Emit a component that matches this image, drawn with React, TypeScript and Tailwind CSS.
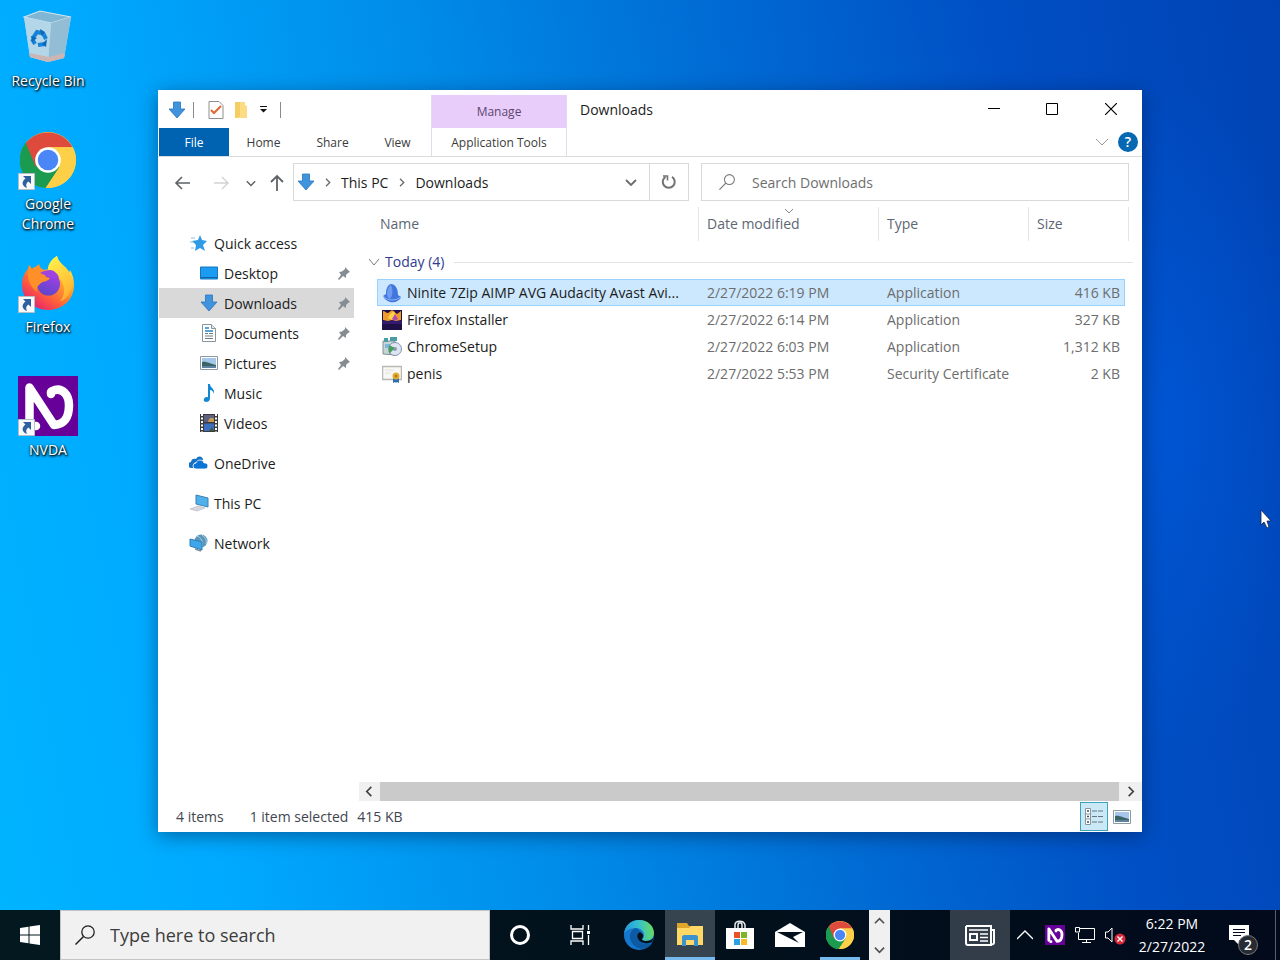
import { useId, type ReactNode } from 'react'
import clsx from 'clsx'

// ---------- Icons ----------

function ChromeIcon({ size }: { size: number }) {
  return (
    <svg width={size} height={size} viewBox="0 0 48 48" aria-hidden="true">
      <circle cx="24" cy="24" r="24" fill="#fdd047" />
      <path d="M24 24 5 9A24 24 0 0 0 22 48l12-18Z" fill="#1a9b4f" />
      <path d="M5 9.500A24 24 0 0 1 45 13H24l-10.400 17Z" fill="#de4a3b" />
      <path d="M24 13h21.300A24 24 0 0 1 22 48l12-18Z" fill="#fdd047" />
      <circle cx="24" cy="24" r="11" fill="#fff" />
      <circle cx="24" cy="24" r="8.800" fill="#4a86f5" />
    </svg>
  )
}

function FirefoxIcon() {
  const id = useId()
  return (
    <svg width="54" height="56" viewBox="0 0 54 56" aria-hidden="true">
      <defs>
        <linearGradient id={`${id}a`} x1="0.85" y1="0.1" x2="0.25" y2="0.95">
          <stop offset="0" stopColor="#fff44f" />
          <stop offset="0.35" stopColor="#ffa52a" />
          <stop offset="0.7" stopColor="#ff5f3a" />
          <stop offset="1" stopColor="#e8246f" />
        </linearGradient>
        <linearGradient id={`${id}b`} x1="0.7" y1="0" x2="0.3" y2="1">
          <stop offset="0" stopColor="#a63ee8" />
          <stop offset="1" stopColor="#5a47c8" />
        </linearGradient>
        <linearGradient id={`${id}c`} x1="0.3" y1="0" x2="0.7" y2="1">
          <stop offset="0" stopColor="#fff04a" />
          <stop offset="1" stopColor="#ffae2e" />
        </linearGradient>
      </defs>
      <path
        d="M36 1c1 5 5 8 9 12 1 1 3 3 3 5l1-3c3 5 4 10 4 15 0 15-12 25-26 25S1 44 1 30c0-8 3-13 6-16l1-4 3 4c2-2 5-2 7-5 0 3 2 5 5 6l4-1C28 9 31 4 36 1Z"
        fill={`url(#${id}a)`}
      />
      <path d="M36 1c1 5 5 8 9 12 7 8 8 18 3 26-2 4-6 7-9 7 6-6 5-16 0-22-3-4-9-6-12-10 0-5 4-10 9-13Z" fill={`url(#${id}c)`} />
      <circle cx="27.500" cy="29" r="11.500" fill={`url(#${id}b)`} />
      <path d="M7 17 8 10l3 4c2-2 5-2 7-5 0 3 2 5 5 6l2 7 4 1c-2 4-8 3-10 6-3 2-4 5-3 8-6-5-10-12-9-20Z" fill="#ff8f28" />
      <path d="M19 18c3-2 7-3 11-3 4 1 7 4 8 8l-10-1Z" fill="#a044e0" />
    </svg>
  )
}

function NvdaIcon({ size }: { size: number }) {
  return (
    <svg width={size} height={size} viewBox="0 0 60 60" aria-hidden="true">
      <path d="M0 0h60v60H0Z" fill="#660099" />
      <path
        d="M11.500 46V11.500L36 49c13-1 15-11 15-20 0-9-6-19-17-14"
        fill="none"
        stroke="#fff"
        strokeWidth="8.500"
        strokeLinecap="round"
        strokeLinejoin="round"
      />
      <path d="M33 16v2M17 50h1" stroke="#fff" strokeWidth="8.500" strokeLinecap="round" />
    </svg>
  )
}

function RecycleIcon() {
  return (
    <svg width="50" height="54" viewBox="0 0 50 54" aria-hidden="true">
      <path d="M1 7 17 1l31 6-7 41-16 4-18-5Z" fill="#b9d9ea" />
      <path d="M1 7 17 1l31 6-20 6Z" fill="#7fb6d4" stroke="#cfe3ee" strokeWidth="1.200" />
      <path d="m28 13 20-6-7 41-16 4Z" fill="#93bdd4" />
      <path d="m1 7 27 6-3 39-18-5Z" fill="#b3d6e9" />
      <path d="m6 43 20 4 16-4-1 5-16 4-18-5Z" fill="#cdb5b4" />
      <g fill="none" stroke="#1683d8" strokeWidth="4">
        <path d="m10 28 4-6 4 1M20 23l3 6M22 34l-7 1M12 34l-3-5" />
      </g>
      <path d="m17 19 5 3-4 4ZM24 29l-1 8-4-3ZM8 26l6 2-5 4Z" fill="#0869bd" />
    </svg>
  )
}

function ShortcutBadge() {
  return (
    <svg className="absolute bottom-0 left-0" width="17" height="17" viewBox="0 0 17 17" aria-hidden="true">
      <path d="M.5.500h16v16H.5Z" fill="#f8f9fa" stroke="#b6bfc8" />
      <path d="M5 3h8v8l-2.500-2.500C8 10 7.500 12 9 15c-5-2-6-6-1.500-9.500Z" fill="#2e5f9e" />
    </svg>
  )
}

function DownArrow() {
  return (
    <svg width="18" height="18" viewBox="0 0 18 18" aria-hidden="true">
      <path d="M5.500 1h7v7H17l-8 9-8-9h4.500Z" fill="#3f94dd" stroke="#2a74bd" strokeWidth=".8" />
    </svg>
  )
}

function Chevron({ dir, size = 12, className }: { dir: 'up' | 'down' | 'left' | 'right'; size?: number; className?: string }) {
  const paths = {
    up: 'M1 9l5-5 5 5',
    down: 'M1 4l5 5 5-5',
    left: 'M8 1 3 6l5 5',
    right: 'M4 1l5 5-5 5',
  }
  return (
    <svg width={size} height={size} viewBox="0 0 12 12" className={className} aria-hidden="true">
      <path d={paths[dir]} fill="none" stroke="currentColor" strokeWidth="1.800" />
    </svg>
  )
}

function PictureIcon() {
  return (
    <svg width="18" height="18" viewBox="0 0 18 18" aria-hidden="true">
      <path d="M.5 2.500h17v13H.5Z" fill="#fff" stroke="#8c9aa5" />
      <path d="M2 4h14v10H2Z" fill="#a6c7ec" />
      <path d="M2 8c5-1 8 2 14 3v3H2Z" fill="#3b6565" />
      <path d="M2 12h14v2H2Z" fill="#5d83a3" />
    </svg>
  )
}

function StarIcon() {
  return (
    <svg width="18" height="18" viewBox="0 0 18 18" aria-hidden="true">
      <path d="m10 1 2 5 5 1-4 4 2 6-5-3-5 3 1-6-4-4 6-1Z" fill="#2f9be6" />
      <path d="M1 4h4M0 8h3M1 14h3" stroke="#7dc1f0" />
    </svg>
  )
}

function DesktopIcon() {
  return (
    <svg width="18" height="18" viewBox="0 0 18 18" aria-hidden="true">
      <path d="M.5 3h17v12H.5Z" fill="#1b9cf2" stroke="#1476c0" />
      <path d="M1 13.500h16" stroke="#0f62a6" />
    </svg>
  )
}

function DocumentIcon() {
  return (
    <svg width="18" height="18" viewBox="0 0 18 18" aria-hidden="true">
      <path d="M2.500.500h9l4 4v13h-13Z" fill="#fff" stroke="#8c9399" />
      <path d="M11.500.500v4h4" fill="#e3e7ea" stroke="#8c9399" />
      <path d="M5 4h4M5 7h8" stroke="#1f82c8" strokeWidth="1.500" />
      <path d="M5 9.500h3M9 9.500h4M5 12h8M5 14.500h8" stroke="#6f7a83" />
    </svg>
  )
}

function MusicIcon() {
  return (
    <svg width="18" height="18" viewBox="0 0 18 18" aria-hidden="true">
      <path d="M8 0h2c0 4 5 4 4 10-1-3-2-4-4-4v8c0 3-2 4-4 4-3 0-3-4 0-5 1 0 1.500 0 2 .5Z" fill="#1487d4" />
    </svg>
  )
}

function VideoIcon() {
  return (
    <svg width="18" height="18" viewBox="0 0 18 18" aria-hidden="true">
      <path d="M0 0h18v18H0Z" fill="#3d3a3c" />
      <path d="M4 1h10v7H4Z" fill="#5b6180" />
      <path d="M4 9.500h10V17H4Z" fill="#3d6fc0" />
      <path d="M8 8c1-5 4-5 6-3v3Z" fill="#c79a4f" />
      <path d="m9 17 3-4 2 4Z" fill="#3d5a40" />
      <path d="M2 0v18M16 0v18" stroke="#fff" strokeWidth="2" strokeDasharray="2 1.500" />
    </svg>
  )
}

function OneDriveIcon() {
  return (
    <svg width="20" height="18" viewBox="0 0 20 18" aria-hidden="true">
      <path d="M5 14H3a3 3 0 0 1-1-6c0-3 3-4 5-3 2-4 7-3 7 1L5 9Z" fill="#1472c4" />
      <path d="M7 15a3 3 0 0 1 0-6c1-4 7-4 8 0 5-1 5 6 1 6Z" fill="#0b74d4" stroke="#fff" strokeWidth=".8" />
    </svg>
  )
}

function PcIcon() {
  return (
    <svg width="20" height="18" viewBox="0 0 20 18" aria-hidden="true">
      <path d="m7 1 12 3v9L7 10Z" fill="#4fb0ec" stroke="#3b80b3" />
      <path d="m1 15 8-3 7 2-8 3Z" fill="#d8d6e0" stroke="#a7abba" strokeWidth=".5" />
    </svg>
  )
}

function NetworkIcon() {
  return (
    <svg width="20" height="18" viewBox="0 0 20 18" aria-hidden="true">
      <circle cx="12" cy="7" r="6.500" fill="#5b96bb" />
      <path d="M8 2c4 1 6 5 5 11M13 1c4 3 5 6 4 9" fill="none" stroke="#a9d2e8" />
      <path d="m1 5 12 3v8L1 12Z" fill="#3fa6ec" stroke="#2d7eb8" />
      <path d="m6 15 6 2" stroke="#7a8fa0" strokeWidth="1.500" />
    </svg>
  )
}

function PinIcon() {
  return (
    <svg width="12" height="13" viewBox="0 0 12 13" aria-hidden="true">
      <path d="m7 0 5 5-2 1-2 2v3L5 9l-4 4-1-1 3-4-2-3 3-.5 3-2.500Z" fill="#858d93" />
    </svg>
  )
}

function NiniteIcon() {
  return (
    <svg width="20" height="20" viewBox="0 0 20 20" aria-hidden="true">
      <path d="M9 1c4 0 7 4 7 11l3 2c-1 4-7 6-11 5-3-1-6-3-7-6l3-2c0-4 1-9 5-10Z" fill="#4275dd" />
      <path d="M9 2c2 4 2 10-1 14-2-1-3-3-3-5 0-4 1-7 4-9Z" fill="#6d9df0" />
      <path d="M1 13c3 3 6 4 9 4s6-1 9-3" fill="none" stroke="#8fb6f8" />
    </svg>
  )
}

function FirefoxInstallerIcon() {
  return (
    <svg width="20" height="20" viewBox="0 0 20 20" aria-hidden="true">
      <path d="M0 0h20v20H0Z" fill="#1e1046" />
      <path d="M1 1c2 0 3 2 5 2l4-3 5 4 4-3v9l-5 1-4-1-4 1-5-1Z" fill="#ee9a2c" />
      <path d="m8 4 4-3 2 6-4 3-4-2Z" fill="#ffd04a" />
      <path d="m10 9 3-5 3 5-3 2Z" fill="#b04bb5" />
      <path d="M0 11h20v3H0Z" fill="#341a6c" />
    </svg>
  )
}

function SetupIcon() {
  return (
    <svg width="20" height="20" viewBox="0 0 20 20" aria-hidden="true">
      <path d="M1 4h12v14l-12-1Z" fill="#c5d6d6" stroke="#7f9196" />
      <path d="M2 1h4v4H2ZM8 0h7v4H8Z" fill="#4b9ca5" />
      <path d="M3 7h5v4H3Z" fill="#7fb6e0" />
      <circle cx="13" cy="12" r="6.500" fill="#dfe4f3" stroke="#8791b0" />
      <circle cx="13" cy="12" r="2" fill="#8f9ab5" />
      <path d="m7 8 6 3-6 6Z" fill="#43a05a" />
    </svg>
  )
}

function CertificateIcon() {
  return (
    <svg width="20" height="20" viewBox="0 0 20 20" aria-hidden="true">
      <path d="M.500 2.500h19v13H.5Z" fill="#f7f7f5" stroke="#b8b8b4" strokeWidth="1.500" />
      <path d="M3 6h9M3 9h6" stroke="#e2e2de" />
      <path d="M11 13v6l2-1 1 1 1-1 2 1v-6Z" fill="#2c6db4" />
      <circle cx="14" cy="12" r="3.500" fill="#e3ad2d" />
      <circle cx="14" cy="12" r="1.500" fill="#b9771b" />
    </svg>
  )
}

function SearchGlyph({ size, className }: { size: number; className?: string }) {
  return (
    <svg width={size} height={size} viewBox="0 0 20 20" className={className} aria-hidden="true">
      <circle cx="13" cy="7" r="6.200" fill="none" stroke="currentColor" strokeWidth="1.300" />
      <path d="M8.500 11.500.500 19.500" stroke="currentColor" strokeWidth="1.500" />
    </svg>
  )
}

function EdgeIcon() {
  const id = useId()
  return (
    <svg width="30" height="30" viewBox="0 0 30 30" aria-hidden="true">
      <defs>
        <linearGradient id={`${id}t`} x1="0" y1="0.5" x2="1" y2="0.4">
          <stop offset="0" stopColor="#2196dc" />
          <stop offset="0.5" stopColor="#35bfd0" />
          <stop offset="1" stopColor="#6bdc58" />
        </linearGradient>
      </defs>
      <circle cx="15" cy="15" r="15" fill="#1677cf" />
      <path d="M0 14C1 5 7 0 15 0c9 0 15 6 15 13 0 5-4 8-8 8-3 0-4-1-4-2 1-1 2-2 2-4 0-4-4-7-8-7-5 0-10 2-12 6Z" fill={`url(#${id}t)`} />
      <path d="M12 8c-6 2-8 9-4 15 3 5 9 7 14 5 3-1 5-3 6-5-8 3-15-1-15-7 0-2 1-4 3-4-1-2-2-3-4-4Z" fill="#0c59a4" />
      <path d="M16 12c-5 2-3 10 4 11 3 1 6 0 8-1l2-5c-2 3-5 4-8 4-3 0-4-1-4-2 2-2 2-5-2-7Z" fill="#03121d" />
    </svg>
  )
}

function FolderIcon() {
  return (
    <svg width="28" height="24" viewBox="0 0 28 24" aria-hidden="true">
      <path d="M1 0h10l2 3h14v19H1Z" fill="#e0a52b" />
      <path d="M1 5h12l2-2h12v19H1Z" fill="#ffd865" />
      <path d="M6 23v-9c0-1 1-2 2-2h12c1 0 2 1 2 2v9h-4v-6h-8v6Z" fill="#3c92cf" />
    </svg>
  )
}

function StoreIcon() {
  return (
    <svg width="30" height="30" viewBox="0 0 30 30" aria-hidden="true">
      <path d="M10 9V5c0-5 9-5 10 0v4M13 8V5c0-3 4-3 4 0v3" fill="none" stroke="#e8eaec" strokeWidth="1.500" />
      <path d="M1 8h28v20c0 1-1 1-1 1H2s-1 0-1-1Z" fill="#fff" />
      <path d="M9 12h6v6H9Z" fill="#e8532a" />
      <path d="M16 12h6v6h-6Z" fill="#7db52b" />
      <path d="M9 19h6v6H9Z" fill="#2ba0e2" />
      <path d="M16 19h6v6h-6Z" fill="#f8ba25" />
    </svg>
  )
}

function MailIcon() {
  return (
    <svg width="30" height="24" viewBox="0 0 30 24" aria-hidden="true">
      <path d="M0 9 15 0l15 9v15H0Z" fill="#fff" />
      <path d="M2 9h26l-10 5 6 6L2 9Z" fill="#04101b" />
    </svg>
  )
}

// ---------- Desktop ----------

interface Shortcut {
  label: string
  icon: ReactNode
  badge?: boolean
}

const SHORTCUTS: Shortcut[] = [
  { label: 'Recycle Bin', icon: <RecycleIcon /> },
  { label: 'Google Chrome', icon: <ChromeIcon size={56} />, badge: true },
  { label: 'Firefox', icon: <FirefoxIcon />, badge: true },
  { label: 'NVDA', icon: <NvdaIcon size={60} />, badge: true },
]

function DesktopShortcuts() {
  return (
    <div className="flex w-24 flex-col">
      {SHORTCUTS.map(s => (
        <button key={s.label} type="button" className="flex h-[123px] flex-col items-center px-1 pt-[7px]">
          <span className="relative flex h-[60px] w-[60px] shrink-0 items-center justify-center">
            {s.icon}
            {s.badge && <ShortcutBadge />}
          </span>
          <span className="mt-1 text-[14px] leading-5 text-white [text-shadow:1px_1px_2px_#000,0_1px_3px_#000]">
            {s.label}
          </span>
        </button>
      ))}
    </div>
  )
}

// ---------- Explorer window ----------

interface NavItem {
  label: string
  icon: ReactNode
  child?: boolean
  pinned?: boolean
  active?: boolean
  spaced?: boolean
}

const NAV: NavItem[] = [
  { label: 'Quick access', icon: <StarIcon /> },
  { label: 'Desktop', icon: <DesktopIcon />, child: true, pinned: true },
  { label: 'Downloads', icon: <DownArrow />, child: true, pinned: true, active: true },
  { label: 'Documents', icon: <DocumentIcon />, child: true, pinned: true },
  { label: 'Pictures', icon: <PictureIcon />, child: true, pinned: true },
  { label: 'Music', icon: <MusicIcon />, child: true },
  { label: 'Videos', icon: <VideoIcon />, child: true },
  { label: 'OneDrive', icon: <OneDriveIcon />, spaced: true },
  { label: 'This PC', icon: <PcIcon />, spaced: true },
  { label: 'Network', icon: <NetworkIcon />, spaced: true },
]

interface FileRow {
  name: string
  icon: ReactNode
  date: string
  type: string
  size: string
  selected?: boolean
}

const FILES: FileRow[] = [
  {
    name: 'Ninite 7Zip AIMP AVG Audacity Avast Avi...',
    icon: <NiniteIcon />,
    date: '2/27/2022 6:19 PM',
    type: 'Application',
    size: '416 KB',
    selected: true,
  },
  { name: 'Firefox Installer', icon: <FirefoxInstallerIcon />, date: '2/27/2022 6:14 PM', type: 'Application', size: '327 KB' },
  { name: 'ChromeSetup', icon: <SetupIcon />, date: '2/27/2022 6:03 PM', type: 'Application', size: '1,312 KB' },
  { name: 'penis', icon: <CertificateIcon />, date: '2/27/2022 5:53 PM', type: 'Security Certificate', size: '2 KB' },
]

function TitleBar() {
  return (
    <div className="flex h-[67px] shrink-0 border-b border-[#dadbdc]">
      <div className="flex w-[273px] flex-col">
        <div className="flex h-[38px] items-center pt-px pl-[10px]">
          <DownArrow />
          <span className="ml-[7px] h-4 w-px bg-[#8a8a8a]" />
          <button type="button" aria-label="Properties" className="ml-[14px]">
            <svg width="16" height="18" viewBox="0 0 16 18" aria-hidden="true">
              <path d="M1 .500h10l4 4v13H1Z" fill="#fff" stroke="#8f8f8f" />
              <path d="m3 9 3 3 7-7" fill="none" stroke="#e0672f" strokeWidth="2" />
            </svg>
          </button>
          <button type="button" aria-label="New folder" className="ml-[10px]">
            <svg width="14" height="18" viewBox="0 0 14 18" aria-hidden="true">
              <path d="M1 1h10v3l2 1v12H1Z" fill="#fbdc85" />
              <path d="M1 1h5v14l-3 2H1Z" fill="#f5cd62" />
            </svg>
          </button>
          <button type="button" aria-label="Customize Quick Access Toolbar" className="ml-[11px]">
            <svg width="9" height="7" viewBox="0 0 9 7" aria-hidden="true">
              <path d="M1 .500h7" stroke="#111" />
              <path d="M1 3h7L4.500 6.500Z" fill="#111" />
            </svg>
          </button>
          <span className="ml-3 h-4 w-px bg-[#8a8a8a]" />
        </div>
        <div className="flex h-7 text-[12px] text-[#3b3b3b] [&>button]:pt-px">
          <button type="button" className="ml-px w-[70px] bg-[#0063b1] text-white">File</button>
          <button type="button" className="w-[69px]">Home</button>
          <button type="button" className="w-[69px]">Share</button>
          <button type="button" className="w-[61px]">View</button>
        </div>
      </div>
      <div className="mt-[5px] flex w-[136px] flex-col border-r border-l border-[#e3dbe8] text-[12px] [&>button]:pt-px">
        <button type="button" className="h-[33px] bg-[#e8cdfb] text-[#5c4570]">Manage</button>
        <button type="button" className="h-7 whitespace-nowrap text-[#3b3b3b]">Application Tools</button>
      </div>
      <h1 className="mt-2 ml-[13px] text-[14px] leading-6 text-[#1c1c1c]">Downloads</h1>
      <div className="ml-auto flex flex-col">
        <div className="flex h-[38px] text-black">
          <button type="button" aria-label="Minimize" className="flex w-[58px] items-center justify-center">
            <svg width="12" height="12" viewBox="0 0 12 12" aria-hidden="true"><path d="M0 5.500h12" stroke="currentColor" /></svg>
          </button>
          <button type="button" aria-label="Maximize" className="flex w-[58px] items-center justify-center">
            <svg width="12" height="12" viewBox="0 0 12 12" aria-hidden="true"><path d="M.5.500h11v11H.5Z" fill="none" stroke="currentColor" /></svg>
          </button>
          <button type="button" aria-label="Close" className="flex w-[61px] items-center justify-center pr-0.5">
            <svg width="12" height="12" viewBox="0 0 12 12" aria-hidden="true"><path d="m0 0 12 12M12 0 0 12" stroke="currentColor" strokeWidth="1.200" /></svg>
          </button>
        </div>
        <div className="flex h-7 items-center justify-end gap-[10px] pr-1">
          <button type="button" aria-label="Expand the Ribbon" className="text-[#9a9a9a]">
            <svg width="12" height="12" viewBox="0 0 12 12" aria-hidden="true"><path d="m0 3 6 6 6-6" fill="none" stroke="currentColor" /></svg>
          </button>
          <button type="button" aria-label="Help" className="h-5 w-5 rounded-full bg-[#0667b2] text-[14px] leading-5 font-semibold text-white">
            ?
          </button>
        </div>
      </div>
    </div>
  )
}

function AddressRow() {
  return (
    <div className="grid h-[50px] shrink-0 grid-cols-[135px_minmax(0,396fr)_12px_minmax(0,428fr)] items-center pr-[13px] text-[14px]">
      <div className="flex items-center pt-px pl-4 text-[#5e6166]">
        <button type="button" aria-label="Back">
          <svg width="18" height="16" viewBox="0 0 18 16" aria-hidden="true"><path d="M16 8H2M8 2 2 8l6 6" fill="none" stroke="currentColor" strokeWidth="1.600" /></svg>
        </button>
        <button type="button" aria-label="Forward" className="ml-5 text-[#d0d2d4]">
          <svg width="18" height="16" viewBox="0 0 18 16" aria-hidden="true"><path d="M2 8h14M10 2l6 6-6 6" fill="none" stroke="currentColor" strokeWidth="1.400" /></svg>
        </button>
        <button type="button" aria-label="Recent locations" className="ml-4">
          <Chevron dir="down" size={10} />
        </button>
        <button type="button" aria-label="Up" className="ml-[14px]">
          <svg width="14" height="18" viewBox="0 0 14 18" aria-hidden="true"><path d="M7 17V2M1 8l6-6 6 6" fill="none" stroke="currentColor" strokeWidth="1.800" /></svg>
        </button>
      </div>
      <div className="flex h-[38px] border border-[#d9d9d9]">
        <div className="flex min-w-0 flex-1 items-center pl-[3px] text-[#1c1c1c]">
          <DownArrow />
          <Chevron dir="right" size={9} className="ml-2 text-[#6b6b6b]" />
          <button type="button" className="ml-[9px]">This PC</button>
          <Chevron dir="right" size={9} className="ml-[9px] text-[#6b6b6b]" />
          <button type="button" className="ml-[9px]">Downloads</button>
          <button type="button" aria-label="Previous locations" className="mr-3 ml-auto text-[#6b6b6b]">
            <Chevron dir="down" />
          </button>
        </div>
        <button type="button" aria-label="Refresh" className="flex w-[39px] items-center justify-center border-l border-[#d9d9d9] text-[#747474]">
          <svg width="16" height="16" viewBox="0 0 16 16" aria-hidden="true">
            <path d="M11 2.800a6 6 0 1 1-6.500 0" fill="none" stroke="currentColor" strokeWidth="2" />
            <path d="M2 2h4.500v4.500" fill="none" stroke="currentColor" strokeWidth="1.600" />
          </svg>
        </button>
      </div>
      <label className="col-start-4 flex h-[38px] items-center border border-[#d9d9d9] pl-[17px] text-[#777]">
        <SearchGlyph size={16} className="shrink-0" />
        <input
          type="search"
          aria-label="Search Downloads"
          placeholder="Search Downloads"
          className="ml-[17px] min-w-0 flex-1 outline-none placeholder:text-[#6e6e6e]"
        />
      </label>
    </div>
  )
}

function NavPane() {
  return (
    <nav className="w-[196px] shrink-0 pt-[21px] pl-px text-[14px] text-[#1c1c1c]">
      <ul>
        {NAV.map(item => (
          <li key={item.label} className={clsx(item.spaced && 'mt-[10px]')}>
            <a
              href="#"
              className={clsx(
                'flex h-[30px] items-center pr-1',
                item.child ? 'pl-10' : 'pl-[30px]',
                item.active && 'bg-[#d9d9d9]',
              )}
            >
              <span className="flex w-5 justify-center">{item.icon}</span>
              <span className="ml-[5px] flex-1">{item.label}</span>
              {item.pinned && <PinIcon />}
            </a>
          </li>
        ))}
      </ul>
    </nav>
  )
}

function FileTable() {
  return (
    <table className="ml-[14px] w-[calc(100%-23px)] table-fixed border-separate border-spacing-0 text-left text-[14px] leading-5">
      <colgroup>
        <col className="w-[9px]" />
        <col />
        <col className="w-[180px]" />
        <col className="w-[150px]" />
        <col className="w-24" />
        <col className="w-1" />
        <col className="w-1" />
      </colgroup>
      <thead>
        <tr className="h-[34px] text-[#5d6673] [&>th]:font-normal">
          <th colSpan={2} className="border-r border-[#e5e5e5] pl-3">Name</th>
          <th className="relative border-r border-[#e5e5e5] pl-2">
            Date modified
            <svg className="absolute top-px left-[85px]" width="10" height="7" viewBox="0 0 10 7" aria-hidden="true">
              <path d="m1 1 4 4 4-4" fill="none" stroke="#8a8a8a" />
            </svg>
          </th>
          <th className="border-r border-[#e5e5e5] pl-2">Type</th>
          <th colSpan={2} className="border-r border-[#e5e5e5] pl-2">Size</th>
          <td />
        </tr>
      </thead>
      <tbody>
        <tr>
          <td colSpan={7} className="h-[38px] p-0 pt-1">
            <button type="button" className="flex w-full items-center text-[#2f3a8f]">
              <svg width="12" height="12" viewBox="0 0 12 12" aria-hidden="true"><path d="m1 3 5 6 5-6" fill="none" stroke="#7b7b7b" /></svg>
              <span className="ml-[5px]">Today (4)</span>
              <span className="ml-[10px] h-px flex-1 bg-[#e2e2e2]" />
            </button>
          </td>
        </tr>
        {FILES.map(file => (
          <tr
            key={file.name}
            aria-selected={file.selected}
            className={clsx(
              'h-[27px] text-[#6d6d6d] [&>td]:p-0',
              file.selected && '[&>td.cell]:border-y [&>td.cell]:border-[#99d1ff] [&>td.cell]:bg-[#cce8ff]',
            )}
          >
            <td />
            <td className={clsx('cell text-[#1c1c1c]', file.selected && 'border-l')}>
              <span className={clsx('flex items-center whitespace-nowrap', file.selected ? 'pl-1' : 'pl-[5px]')}>
                <span className="h-5 w-5 shrink-0">{file.icon}</span>
                <span className="ml-[5px]">{file.name}</span>
              </span>
            </td>
            <td className="cell"><span className="pl-2">{file.date}</span></td>
            <td className="cell"><span className="pl-2">{file.type}</span></td>
            <td className={clsx('cell text-right', file.selected && 'border-r')}>
              <span className={file.selected ? 'pr-1' : 'pr-[5px]'}>{file.size}</span>
            </td>
          </tr>
        ))}
      </tbody>
    </table>
  )
}

function ExplorerWindow() {
  return (
    <section
      aria-label="Downloads"
      className="absolute top-[90px] right-[138px] bottom-[78px] left-[158px] flex flex-col bg-white shadow-[0_4px_18px_rgba(0,20,60,0.45)]"
    >
      <TitleBar />
      <AddressRow />
      <div className="flex min-h-0 flex-1">
        <NavPane />
        <div className="flex min-w-0 flex-1 flex-col">
          <FileTable />
          <div className="mt-auto ml-[5px] flex h-[19px] items-center bg-[#f0f0f0] text-[#404040]">
            <button type="button" aria-label="Scroll left" className="flex w-[21px] justify-center">
              <Chevron dir="left" size={11} />
            </button>
            <div className="h-full flex-1 bg-[#cacaca]" />
            <button type="button" aria-label="Scroll right" className="flex w-[23px] justify-center">
              <Chevron dir="right" size={11} />
            </button>
          </div>
        </div>
      </div>
      <footer className="flex h-[31px] shrink-0 items-center pl-[18px] text-[14px] text-[#3f4650]">
        <span>4 items</span>
        <span className="ml-[26px]">1 item selected</span>
        <span className="ml-[9px]">415 KB</span>
        <div className="ml-auto flex items-center pr-[11px]">
          <button type="button" aria-label="Details view" className="flex h-[29px] w-7 items-center justify-center border border-[#3da3bd] bg-[#cbe8f6]">
            <svg width="18" height="17" viewBox="0 0 18 17" aria-hidden="true">
              <path d="M.5.500h5v16h-5ZM.5 6h5M.5 11h5" fill="#fff" stroke="#8b959c" />
              <path d="M2 3h2M2 8.500h2M2 14h2" stroke="#35566b" strokeWidth="1.500" />
              <path d="M7 3h5M13 3h5M7 8.500h5M13 8.500h5M7 14h5M13 14h5" stroke="#667780" />
            </svg>
          </button>
          <button type="button" aria-label="Large icons view" className="ml-[5px]">
            <PictureIcon />
          </button>
        </div>
      </footer>
    </section>
  )
}

// ---------- Taskbar ----------

function TaskButton({ label, className, children }: { label: string; className?: string; children: ReactNode }) {
  return (
    <button type="button" aria-label={label} className={clsx('flex h-full shrink-0 items-center justify-center', className)}>
      {children}
    </button>
  )
}

function Taskbar() {
  return (
    <footer className="flex h-[50px] shrink-0 bg-linear-to-r from-[#03191f] via-[#02111c] to-[#020a1c] text-white">
      <TaskButton label="Start" className="w-[60px]">
        <svg width="20" height="20" viewBox="0 0 20 20" aria-hidden="true">
          <path d="m0 3 8.500-1.200v7.700H0ZM9.500 1.600 20 0v9.500H9.500ZM0 10.500h8.500v7.700L0 17ZM9.500 10.500H20V20L9.500 18.400Z" fill="#fff" />
        </svg>
      </TaskButton>
      <label className="flex w-[430px] items-center border border-[#c4c4c4] bg-[#f1f1f1] pl-[14px] text-[#1f1f1f]">
        <SearchGlyph size={20} className="shrink-0" />
        <input
          type="search"
          aria-label="Type here to search"
          placeholder="Type here to search"
          className="ml-[15px] min-w-0 flex-1 text-[18px] outline-none placeholder:text-[#3c3c3c]"
        />
      </label>
      <TaskButton label="Cortana" className="w-[60px]">
        <span className="h-5 w-5 rounded-full border-3 border-white" />
      </TaskButton>
      <TaskButton label="Task View" className="w-[60px]">
        <svg width="21" height="20" viewBox="0 0 21 20" aria-hidden="true">
          <path d="M1 0v4h12V0M1 20v-4h12v4M2.500 6.500h10v7h-10ZM18.500 0v5M18.500 10v10" fill="none" stroke="#fff" strokeWidth="1.300" />
          <path d="M17 6h3v3h-3Z" fill="#fff" />
        </svg>
      </TaskButton>
      <TaskButton label="Microsoft Edge" className="ml-[3px] w-[52px]"><EdgeIcon /></TaskButton>
      <TaskButton label="File Explorer" className="relative w-[50px] bg-[#364450]">
        <FolderIcon />
        <span className="absolute inset-x-0 bottom-0 h-[3px] bg-[#76b9ed]" />
      </TaskButton>
      <TaskButton label="Microsoft Store" className="w-[50px]"><StoreIcon /></TaskButton>
      <TaskButton label="Mail" className="w-[50px]"><MailIcon /></TaskButton>
      <TaskButton label="Google Chrome" className="relative w-[50px]">
        <ChromeIcon size={28} />
        <span className="absolute inset-x-[5px] bottom-0 h-[3px] bg-[#76b9ed]" />
      </TaskButton>
      <div className="ml-1 flex w-[21px] flex-col items-center justify-between bg-[#f0f0f0] py-[5px] text-[#505050]">
        <button type="button" aria-label="Scroll up"><Chevron dir="up" size={11} className="block" /></button>
        <button type="button" aria-label="Scroll down"><Chevron dir="down" size={11} className="block" /></button>
      </div>
      <TaskButton label="News and interests" className="ml-auto w-[60px] bg-[#333d49]">
        <svg width="30" height="21" viewBox="0 0 30 21" aria-hidden="true">
          <path d="M1 1h25v18a2 2 0 0 0 3-1V5h-3M1 1v17a2 2 0 0 0 2 2h24" fill="none" stroke="#fff" strokeWidth="2" />
          <path d="M4 5h19" stroke="#fff" strokeWidth="1.500" />
          <path d="M5 9h7v6H5Z" fill="none" stroke="#fff" strokeWidth="2" />
          <path d="M15 9h8M15 12.500h8M15 16h8" stroke="#fff" strokeWidth="1.500" />
        </svg>
      </TaskButton>
      <TaskButton label="Show hidden icons" className="w-[30px]">
        <svg width="16" height="10" viewBox="0 0 16 10" aria-hidden="true"><path d="m0 9 8-8 8 8" fill="none" stroke="#fff" strokeWidth="1.300" /></svg>
      </TaskButton>
      <TaskButton label="NVDA" className="w-[30px]"><NvdaIcon size={20} /></TaskButton>
      <TaskButton label="Network" className="w-[30px]">
        <svg width="20" height="18" viewBox="0 0 20 18" aria-hidden="true">
          <path d="M5 2.500h14.500v11H3.500V7M11.500 13.500v3M7 16.500h9" fill="none" stroke="#fff" />
          <path d="M.5 1.500h4V6h-4Z" fill="#020c1c" stroke="#fff" />
        </svg>
      </TaskButton>
      <TaskButton label="Volume" className="w-[30px]">
        <svg width="21" height="19" viewBox="0 0 21 19" aria-hidden="true">
          <path d="M.5 6H3l4-4v14l-4-4H.5Z" fill="none" stroke="#fff" />
          <circle cx="15" cy="13" r="5.500" fill="#d8293a" />
          <path d="m12.500 10.500 5 5M17.500 10.500l-5 5" stroke="#fff" strokeWidth="1.400" />
        </svg>
      </TaskButton>
      <div className="flex w-[84px] flex-col items-center justify-center text-[14px] leading-[23px] whitespace-nowrap">
        <span>6:22 PM</span>
        <span>2/27/2022</span>
      </div>
      <TaskButton label="Notifications" className="relative w-[61px]">
        <svg className="mr-3" width="20" height="20" viewBox="0 0 20 20" aria-hidden="true">
          <path d="M0 0h20v15H10v5l-5-5H0Z" fill="#fff" />
          <path d="M4 4.500h12M4 7.500h12M4 10.500h8" stroke="#020a1c" />
        </svg>
        <span className="absolute right-[17px] bottom-[5px] h-5 w-5 rounded-full border border-[#777] bg-[#272b33] text-[14px] leading-[18px] font-semibold">
          2
        </span>
      </TaskButton>
      <button type="button" aria-label="Show desktop" className="w-[5px] border-l border-[#56606e]" />
    </footer>
  )
}

export default function App() {
  return (
    <div className="flex h-screen flex-col overflow-hidden bg-[radial-gradient(ellipse_150px_340px_at_91%_44%,rgba(0,100,240,0.4),transparent),linear-gradient(80deg,#00b4ff_0%,#00aaff_16%,#008ce8_40%,#006cd4_60%,#004fc4_80%,#0043b4_100%)] font-['Open_Sans','Noto_Sans',sans-serif]">
      <main className="relative min-h-0 flex-1">
        <DesktopShortcuts />
        <ExplorerWindow />
        <svg className="pointer-events-none absolute top-[509px] right-[8px]" width="12" height="20" viewBox="0 0 12 20" aria-hidden="true">
          <path d="M1 1v15l3-3 3 6 2-1-2-6h4Z" fill="#fff" stroke="#10244c" strokeWidth=".8" />
        </svg>
      </main>
      <Taskbar />
    </div>
  )
}
